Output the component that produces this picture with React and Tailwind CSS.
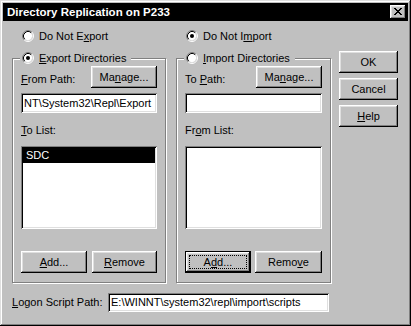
import React from "react";

const BEVEL =
  "shadow-[inset_-1px_-1px_0_#000,inset_1px_1px_0_#fff,inset_-2px_-2px_0_#808080,inset_2px_2px_0_#dfdfdf]";
const SUNKEN =
  "shadow-[inset_1px_1px_0_#808080,inset_-1px_-1px_0_#fff,inset_2px_2px_0_#000,inset_-2px_-2px_0_#dfdfdf]";

function Radio({ checked }) {
  return (
    <svg width="12" height="12" viewBox="0 0 12 12" className="shrink-0 block">
      <circle cx="6" cy="6" r="4.2" fill="#fff" />
      <path d="M2.11 9.89A5.5 5.5 0 0 1 9.89 2.11" stroke="#808080" fill="none" />
      <path d="M9.89 2.11A5.5 5.5 0 0 1 2.11 9.89" stroke="#fff" fill="none" />
      <path d="M2.82 9.18A4.5 4.5 0 0 1 9.18 2.82" stroke="#000" fill="none" />
      <path d="M9.18 2.82A4.5 4.5 0 0 1 2.82 9.18" stroke="#dfdfdf" fill="none" />
      {checked && <circle cx="6" cy="6" r="2" fill="#000" />}
    </svg>
  );
}

function Btn({ children, className = "" }) {
  return (
    <div
      className={`h-[22px] bg-[#c0c0c0] flex items-center justify-center text-black ${BEVEL} ${className}`}
    >
      <span className="leading-[13px]">{children}</span>
    </div>
  );
}

function FocusBtn({ children, className = "" }) {
  return (
    <div
      className={`h-[22px] bg-[#c0c0c0] flex p-[4px] shadow-[inset_0_0_0_1px_#000,inset_-2px_-2px_0_#000,inset_2px_2px_0_#fff,inset_-3px_-3px_0_#808080,inset_3px_3px_0_#dfdfdf] ${className}`}
    >
      <div className="flex-1 border border-dotted border-black flex items-center justify-center">
        <span className="leading-[13px]">{children}</span>
      </div>
    </div>
  );
}

function U({ children }) {
  return <u className="underline decoration-1 underline-offset-[1px]">{children}</u>;
}

function Group({ width, checked, radioLabel, pathLabel, listLabel, pathValue, listItems, addBtn, removeBtn }) {
  return (
    <fieldset
      className={`m-0 min-w-0 border border-[#808080] px-[8px] pt-[1px] pb-[9px] shadow-[inset_1px_1px_0_#fff,1px_1px_0_#fff] ${width}`}
    >
      <legend className="-ml-[1px] pl-[2px] pr-[5px] bg-[#c0c0c0]">
        <div className="flex items-center gap-[5px] h-[14px]">
          <Radio checked={checked} />
          <span className="leading-[13px]">{radioLabel}</span>
        </div>
      </legend>
      <div className="flex items-end justify-between h-[22px]">
        <span className="leading-[13px] pb-[2px]">{pathLabel}</span>
        <Btn className="w-[66px]">
          Ma<U>n</U>age...
        </Btn>
      </div>
      <div className={`mt-[5px] h-[20px] bg-white ${SUNKEN} flex items-center pl-[3px] overflow-hidden whitespace-nowrap`}>
        <span className="leading-[13px]">{pathValue}</span>
      </div>
      <div className="mt-[11px] h-[13px] leading-[13px]">{listLabel}</div>
      <div className={`mt-[9px] h-[83px] bg-white ${SUNKEN} p-[2px]`}>
        {listItems.map((it) => (
          <div key={it} className="h-[15px] bg-black text-white flex items-center pl-[3px]">
            <span className="leading-[13px]">{it}</span>
          </div>
        ))}
      </div>
      <div className="mt-[22px] flex justify-between">
        {addBtn}
        {removeBtn}
      </div>
    </fieldset>
  );
}

export default function App() {
  return (
    <div
      className={`w-[411px] h-[326px] bg-[#c0c0c0] p-[3px] flex flex-col text-[11px] text-black font-['Liberation_Sans',Arial,sans-serif] shadow-[inset_-1px_-1px_0_#000,inset_1px_1px_0_#dfdfdf,inset_-2px_-2px_0_#808080,inset_2px_2px_0_#fff]`}
    >
      {/* Title bar */}
      <div className="h-[18px] bg-black flex items-center pl-[4px] pr-[2px] shrink-0">
        <span className="text-white font-bold text-[11.5px] leading-[13px]">Directory Replication on P233</span>
        <div className={`ml-auto w-[16px] h-[14px] bg-[#c0c0c0] flex items-center justify-center ${BEVEL}`}>
          <svg width="8" height="7" viewBox="0 0 8 7" shapeRendering="crispEdges" className="block -mt-[1px]">
            <path
              fill="#000"
              d="M0 0h2v1H0zM6 0h2v1H6zM1 1h2v1H1zM5 1h2v1H5zM2 2h4v1H2zM3 3h2v1H3zM2 4h4v1H2zM1 5h2v1H1zM5 5h2v1H5zM0 6h2v1H0zM6 6h2v1H6z"
            />
          </svg>
        </div>
      </div>

      {/* Body */}
      <div className="flex flex-col pl-[9px] pt-[8px]">
        <div className="flex">
          {/* Left column */}
          <div className="flex flex-col w-[154px]">
            <div className="h-[14px] flex items-center gap-[5px] pl-[10px]">
              <Radio checked={false} />
              <span className="leading-[13px]">
                Do Not E<U>x</U>port
              </span>
            </div>
            <div className="mt-[8px]">
              <Group
                width="w-[154px]"
                checked={true}
                radioLabel={
                  <>
                    <U>E</U>xport Directories
                  </>
                }
                pathLabel={
                  <>
                    <U>F</U>rom Path:
                  </>
                }
                listLabel={
                  <>
                    <U>T</U>o List:
                  </>
                }
                pathValue="NT\System32\Repl\Export"
                listItems={["SDC"]}
                addBtn={
                  <Btn className="w-[66px]">
                    <U>A</U>dd...
                  </Btn>
                }
                removeBtn={
                  <Btn className="w-[65px]">
                    <U>R</U>emove
                  </Btn>
                }
              />
            </div>
          </div>

          {/* Right column */}
          <div className="flex flex-col w-[155px] ml-[10px]">
            <div className="h-[14px] flex items-center gap-[5px] pl-[10px]">
              <Radio checked={true} />
              <span className="leading-[13px]">
                Do Not I<U>m</U>port
              </span>
            </div>
            <div className="mt-[8px]">
              <Group
                width="w-[155px]"
                checked={false}
                radioLabel={
                  <>
                    <U>I</U>mport Directories
                  </>
                }
                pathLabel={
                  <>
                    To <U>P</U>ath:
                  </>
                }
                listLabel={
                  <>
                    Fr<U>o</U>m List:
                  </>
                }
                pathValue=""
                listItems={[]}
                addBtn={
                  <FocusBtn className="w-[66px]">
                    A<U>d</U>d...
                  </FocusBtn>
                }
                removeBtn={
                  <Btn className="w-[67px]">
                    Remo<U>v</U>e
                  </Btn>
                }
              />
            </div>
          </div>

          {/* Buttons column */}
          <div className="flex flex-col gap-[5px] ml-[8px] mt-[22px] w-[59px]">
            <Btn>OK</Btn>
            <Btn>Cancel</Btn>
            <Btn>
              <U>H</U>elp
            </Btn>
          </div>
        </div>

        {/* Bottom row */}
        <div className="flex items-center mt-[10px]">
          <span className="leading-[13px] w-[96px]">
            <U>L</U>ogon Script Path:
          </span>
          <div className={`w-[221px] h-[19px] bg-white ${SUNKEN} flex items-center pl-[3px] whitespace-nowrap overflow-hidden`}>
            <span className="leading-[13px]">E:\WINNT\system32\repl\import\scripts</span>
          </div>
        </div>
      </div>
    </div>
  );
}
